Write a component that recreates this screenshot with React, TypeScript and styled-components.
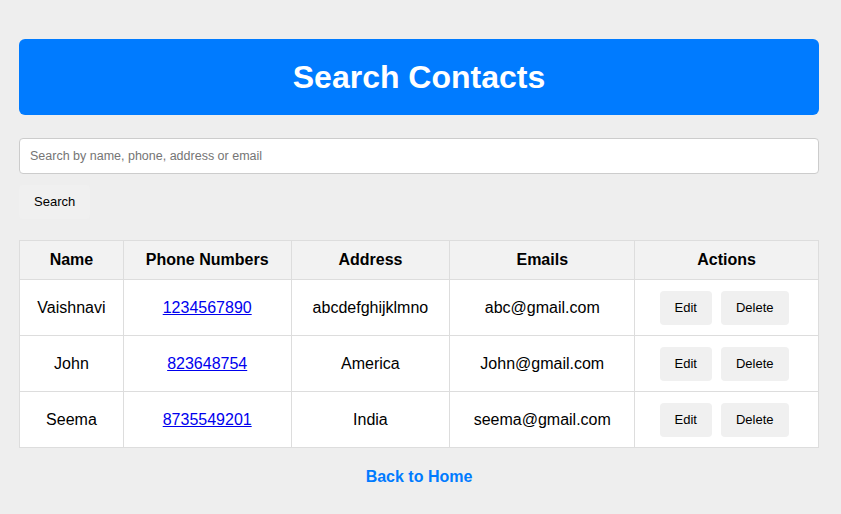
import React from 'react'
import styled, { createGlobalStyle } from 'styled-components'

const GlobalStyle = createGlobalStyle`
  body {
    margin: 0;
    background: #eeeeee;
    font-family: 'Liberation Sans', Arial, sans-serif;
  }
`

const Page = styled.div`
  width: 800px;
  margin-left: 19px;
  padding: 39px 0 20px;
`

const Banner = styled.header`
  background: #007bff;
  border-radius: 6px;
  padding: 20px;
  height: 36px;
  text-align: center;
`

const Title = styled.h1`
  margin: 0;
  color: #fff;
  font-size: 32px;
  font-weight: bold;
  line-height: 36px;
`

const SearchInput = styled.input`
  display: block;
  box-sizing: border-box;
  width: 100%;
  height: 36px;
  margin-top: 23px;
  padding: 0 10px;
  border: 1px solid #ccc;
  border-radius: 4px;
  background: #fff;
  font-family: 'Liberation Sans', Arial, sans-serif;
  font-size: 12.5px;
  &::placeholder {
    color: #757575;
  }
`

const Button = styled.button`
  border: none;
  border-radius: 4px;
  background: #f0f0f0;
  color: #000;
  padding: 10px 15px;
  font-family: 'Liberation Sans', Arial, sans-serif;
  font-size: 13px;
  line-height: 14px;
  cursor: pointer;
`

const SearchButton = styled(Button)`
  display: block;
  margin-top: 11px;
`

const Table = styled.table`
  width: 100%;
  margin-top: 21px;
  border-collapse: collapse;
  background: #fff;
  font-size: 16px;
`

const Th = styled.th<{ $w: number }>`
  box-sizing: border-box;
  width: ${p => p.$w}px;
  background: #f2f2f2;
  border: 1px solid #ddd;
  padding: 10px;
  line-height: 18px;
  font-weight: bold;
  text-align: center;
`

const Td = styled.td`
  border: 1px solid #ddd;
  padding: 10px;
  height: 35px;
  text-align: center;
  color: #000;
`

const Phone = styled.a`
  color: #0000ee;
  text-decoration: underline;
`

const Actions = styled.div`
  display: flex;
  justify-content: center;
  gap: 9px;
  padding-right: 5px;
`

const Footer = styled.div`
  text-align: center;
  margin-top: 20px;
`

const HomeLink = styled.a`
  color: #007bff;
  font-weight: bold;
  font-size: 16px;
  text-decoration: none;
`

const contacts = [
  { name: 'Vaishnavi', phone: '1234567890', address: 'abcdefghijklmno', email: 'abc@gmail.com' },
  { name: 'John', phone: '823648754', address: 'America', email: 'John@gmail.com' },
  { name: 'Seema', phone: '8735549201', address: 'India', email: 'seema@gmail.com' },
]

export default function App() {
  return (
    <>
      <GlobalStyle />
      <Page>
        <Banner>
          <Title>Search Contacts</Title>
        </Banner>
        <SearchInput placeholder="Search by name, phone, address or email" />
        <SearchButton>Search</SearchButton>
        <Table>
          <thead>
            <tr>
              <Th $w={104}>Name</Th>
              <Th $w={168}>Phone Numbers</Th>
              <Th $w={159}>Address</Th>
              <Th $w={185}>Emails</Th>
              <Th $w={184}>Actions</Th>
            </tr>
          </thead>
          <tbody>
            {contacts.map(c => (
              <tr key={c.name}>
                <Td>{c.name}</Td>
                <Td>
                  <Phone href="#">{c.phone}</Phone>
                </Td>
                <Td>{c.address}</Td>
                <Td>{c.email}</Td>
                <Td>
                  <Actions>
                    <Button>Edit</Button>
                    <Button>Delete</Button>
                  </Actions>
                </Td>
              </tr>
            ))}
          </tbody>
        </Table>
        <Footer>
          <HomeLink href="#">Back to Home</HomeLink>
        </Footer>
      </Page>
    </>
  )
}
